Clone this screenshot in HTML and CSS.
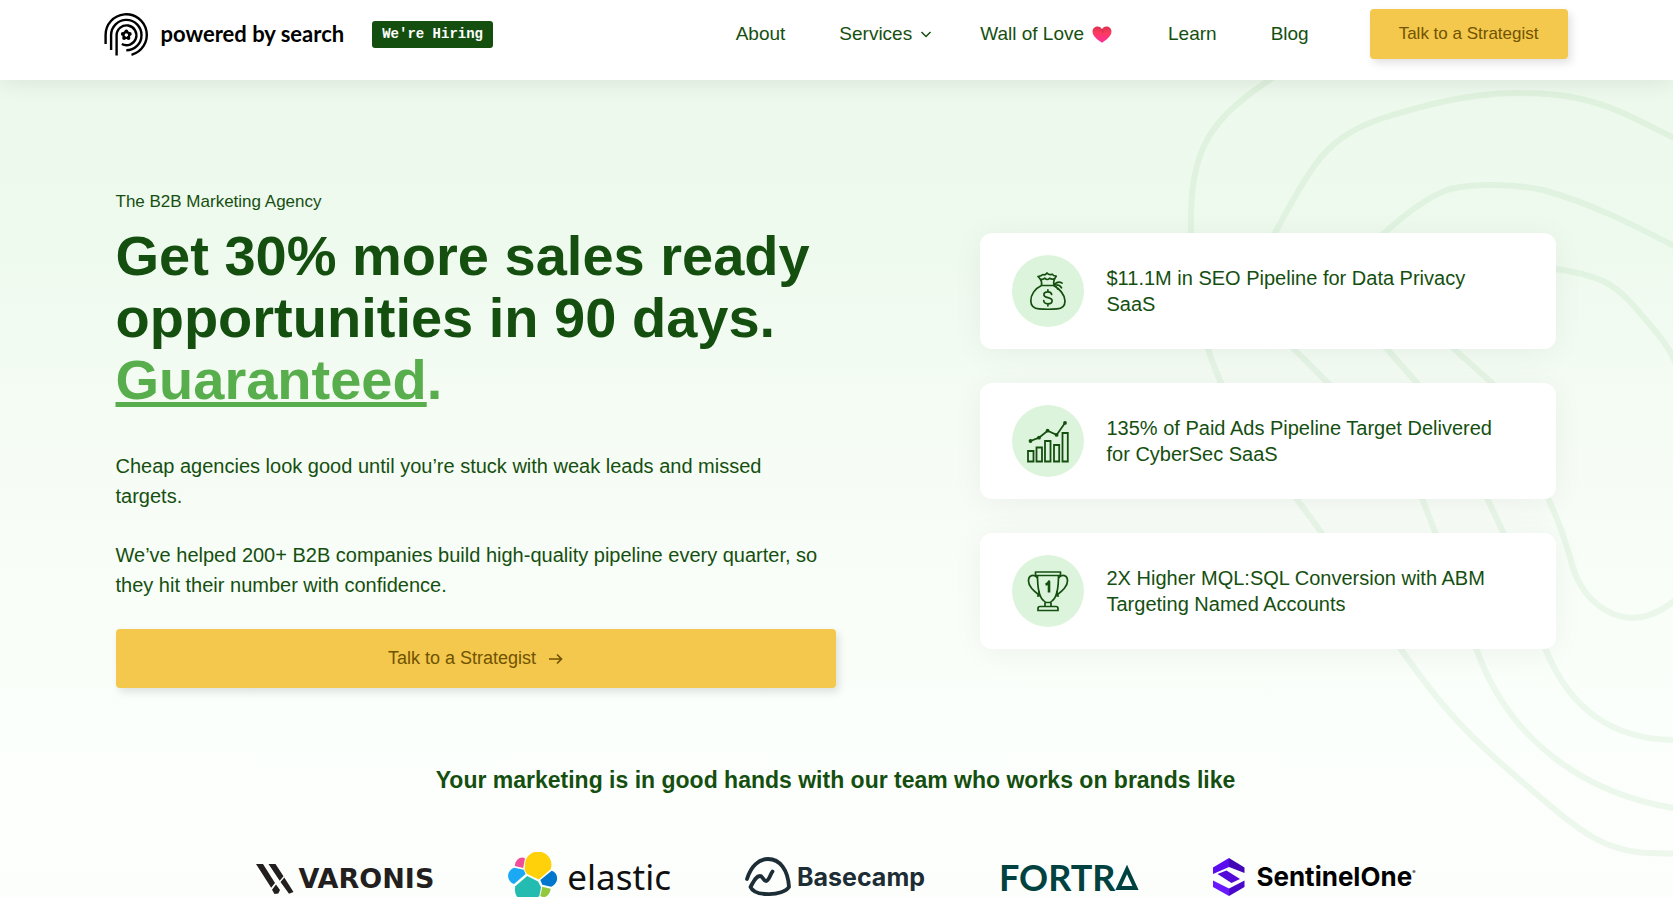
FILE: index.html
```html
<!DOCTYPE html>
<html lang="en">
<head>
<meta charset="utf-8">
<meta name="viewport" content="width=device-width, initial-scale=1">
<title>Powered by Search</title>
<link rel="stylesheet" href="styles.css">
</head>
<body>
<header class="site-header">
  <div class="header-inner">
    <a class="brand" href="#">
      <svg class="brand-mark" viewBox="1 -1 46 46" width="46" height="46" fill="none" stroke="#000" stroke-width="2.4" aria-hidden="true">
        <path d="M2.6 32V23A20.6 20.6 0 1 1 28.5 42.8"/>
        <path d="M8.1 38V23A15.2 15.2 0 1 1 23.3 38.3"/>
        <path d="M13.6 43.500V23A9.900 9.900 0 1 1 18.800 32"/>
        <g fill="#000" stroke="none"><circle cx="23.300" cy="19.400" r="1.900"/><circle cx="26.800" cy="21.900" r="1.900"/><circle cx="25.500" cy="26" r="1.900"/><circle cx="21.100" cy="26" r="1.900"/><circle cx="19.800" cy="21.900" r="1.900"/></g>
        <circle cx="23.300" cy="23.100" r="2.900" stroke-width="2.200"/>
      </svg>
      <span class="brand-name">powered by search</span>
    </a>
    <a class="hiring" href="#">We're Hiring</a>
    <nav class="nav" aria-label="Main">
      <a href="#">About</a>
      <a href="#">Services
        <svg class="chevron" viewBox="0 0 12 12" width="12" height="12" fill="none" stroke="currentColor" stroke-width="1.500" aria-hidden="true"><path d="M1.500 4l4.500 4.500L10.500 4"/></svg></a>
      <a href="#">Wall of Love
        <svg class="heart" viewBox="0 0 20 17" width="20" height="17" aria-hidden="true"><defs><linearGradient id="h" x1="0" y1="0" x2="0" y2="1"><stop offset="0" stop-color="#dc304f"/><stop offset=".4" stop-color="#fb3c5e"/><stop offset="1" stop-color="#ff2ba0"/></linearGradient></defs><path fill="url(#h)" d="M10 3C11.500.8 13.300.200 15.200.5 18 .9 19.800 3.200 19.400 6.300 19 10.300 15.300 13.200 10.800 16.300Q10 16.900 9.200 16.300C4.700 13.200 1 10.300.6 6.300.2 3.200 2 .9 4.800.5 6.700.2 8.500.8 10 3z"/><path d="M10 3.200q1 1.500.7 3.500" fill="none" stroke="#ce2748" stroke-width="1"/></svg></a>
      <a href="#">Learn</a>
      <a href="#">Blog</a>
    </nav>
    <button class="cta cta-small" type="button">Talk to a Strategist</button>
  </div>
</header>
<main class="hero">
  <svg class="contours" viewBox="1173 80 500 817" width="500" height="817" fill="none" stroke="#4caa4c" stroke-width="6" aria-hidden="true">
    <path d="M1275 76C1245 96 1222 114 1208 138C1194 163 1190 193 1191 233C1192 285 1197 320 1208 349Q1212 362 1221 383C1240 428 1270 455 1296 498L1321 532C1352 575 1371 605 1400 648C1440 705 1466 734 1520 780C1574 826 1600 852 1650 853L1680 854"/>
    <path d="M1680 141L1640 121C1593 97 1560 93 1513 93C1467 94 1425 105 1383 118C1350 129 1330 144 1315 165C1299 187 1288 209 1275 233C1252 280 1270 320 1294 349L1328 383C1370 421 1404 454 1422 498L1435 532C1450 575 1456 605 1476 648C1508 739 1583 795 1680 809"/>
    <path d="M1680 249C1630 223 1590 203 1543 190C1515 184 1475 183 1450 189C1424 198 1403 217 1384 233C1345 270 1352 320 1387 349L1417 383C1452 421 1470 458 1487 498L1503 532C1520 575 1529 610 1545 648C1570 710 1613 741 1680 740"/>
    <path d="M1677 366C1672 353 1667 345 1656 332C1639 312 1624 291 1603 281Q1585 273 1556 269C1490 260 1415 305 1454 349L1492 383C1525 420 1532 454 1548 498Q1561 526 1570 557C1577 587 1591 604 1613 614Q1646 627 1680 596"/>
  </svg>
  <div class="hero-inner">
    <section class="pitch">
      <p class="eyebrow">The B2B Marketing Agency</p>
      <h1>Get 30% more sales ready opportunities in 90 days. <span class="accent"><u>Guaranteed</u>.</span></h1>
      <p class="lead">Cheap agencies look good until you’re stuck with weak leads and missed targets.</p>
      <p class="lead">We’ve helped 200+ B2B companies build high-quality pipeline every quarter, so they hit their number with confidence.</p>
      <button class="cta cta-wide" type="button">Talk to a Strategist
        <svg viewBox="0 0 14 12" width="14" height="12" fill="none" stroke="currentColor" stroke-width="1.700" aria-hidden="true"><path d="M0 6h12.500M8 1.500L12.500 6 8 10.500"/></svg></button>
    </section>
    <section class="results" aria-label="Results">
      <article class="card">
        <span class="badge"><svg viewBox="0 0 40 40" width="40" height="40" fill="none" stroke="#154f10" stroke-width="1.700" stroke-linejoin="round" stroke-linecap="round" aria-hidden="true"><path d="M13.500 14.500C7 17.500 2.500 24 2.800 30c.2 5.200 3.600 7.600 8.200 7.900q9 .700 18 0c4.600-.3 8-2.700 8-7.900C37 24 31.500 17.500 25.500 14.500zM13.500 14.200c.5-3 .2-4.500-1.500-6.500L10 5.500c2-.3 3.500-.5 4.800-2 1.700.7 2.700.700 4.200-1.500 1.600 2 3 2.300 5.200 1.200.8 1.500 2 2 4 2-2.200 3-3.200 5.500-2.200 9M12.500 8c2 .700 3 .500 4.200-.8 1.700 1.700 3.400 1.700 4.900 0 1.400 1.200 2.600 1.400 4.700.5M26 14.300c2.500-3.500 5-3.800 8-2.300M26 14.300c3-.8 5.500-.5 7.500 2.500M26 14.300c1.500.7 3 2 3.600 3.700"/><path d="M23.700 23.500c-.4-2-1.700-2.700-3.800-2.700-2.400 0-4 1.100-4 2.900 0 4.200 8.200 1.700 8.200 6 0 2-1.700 3.100-4.200 3.100-2.300 0-4-1-4.200-3.300M19.900 18.800v2M19.900 32.800v2"/></svg></span>
        <p>$11.1M in SEO Pipeline for Data Privacy SaaS</p>
      </article>
      <article class="card">
        <span class="badge"><svg viewBox="0 0 44 44" width="44" height="44" fill="none" stroke="#154f10" stroke-width="1.800" aria-hidden="true"><path d="M2 32h5.500v10.500H2zM10.500 28.500H16v14h-5.500zM19 22h5.500v20.500H19zM28 26h5.200v16.500H28zM36.500 14h5.300v28.500h-5.300z"/><path d="M4.500 22l8.500-3.300 8.600-7 9 4.200 8.400-12"/><g fill="#154f10" stroke="none"><circle cx="4.500" cy="22" r="1.900"/><circle cx="13" cy="18.700" r="1.900"/><circle cx="21.600" cy="11.700" r="1.900"/><circle cx="30.600" cy="15.900" r="1.900"/><circle cx="39" cy="3.900" r="1.900"/></g></svg></span>
        <p>135% of Paid Ads Pipeline Target Delivered for CyberSec SaaS</p>
      </article>
      <article class="card">
        <span class="badge"><svg viewBox="0 0 42 42" width="42" height="42" fill="none" stroke="#154f10" stroke-width="1.700" stroke-linejoin="round" aria-hidden="true"><path d="M8.500 2h25v3.500h-25zM10.500 5.500c0 10 1 21 6 25q1.500 1.500 2.500 2h4q1-.5 2.500-2c5-4 6-15 6-25M18 32.500v4h6v-4M11 40.500v-2q0-2 2-2h16q2 0 2 2v2z"/><path d="M10.500 8C7 3.800 1.500 5 1.500 11c0 5.500 5 9.500 11 14.500M31.500 8c3.500-4.200 9-3 9 3 0 5.500-5 9.500-11 14.500M12 21v5h-2M30 21v5h2"/><path d="M18.500 14.500q3-.5 3.500-3v11" stroke-width="2.600"/></svg></span>
        <p>2X Higher MQL:SQL Conversion with ABM Targeting Named Accounts</p>
      </article>
    </section>
  </div>
  <section class="clients">
    <h2>Your marketing is in good hands with our team who works on brands like</h2>
    <ul class="logos">
      <li class="varonis"><svg viewBox="0 0 38 30" width="38" height="30" fill="#231f20" aria-hidden="true"><path d="M0 0h7l12 19-3.800 4.700zM12.500 0h7l8 12.300-3.800 4.500zM24.500 18l3.800-4.400L37.500 28l-4.500 1.800zM20 20.500l4 5.500-1.700 3.500-3.800.500-2.500-4.300z"/></svg><span>VARONIS</span></li>
      <li class="elastic"><svg viewBox="0 -1 51 51" width="50" height="50" aria-hidden="true"><path fill="#fed10a" d="M19.500 21.500l12 5.500 12-10.500A13.500 13.500 0 1 0 17.500 9.500l-.5 8z"/><path fill="#f04e98" d="M7 13.300l8.500 2L17.300 5.500C13.500 3 7.500 6 7 13.300z"/><path fill="#1ba9f5" d="M6.500 15C1 16.500-1.500 23 1.200 27.500 2.500 30 4.500 31.200 6.200 31.700L18 21.500l-2-4.300z"/><path fill="#24bbb1" d="M19.500 23.500L7.500 34C4 48 22 57 32 43.500l1.700-8.500-3-6z"/><path fill="#0077cc" d="M33 27.500L44.500 18c5.500 1.500 7.500 8.500 3.500 13.500-1 1.300-2.500 2.500-4 3L35 32.500z"/><path fill="#93c83e" d="M35 34.500l8.500 2C43 43 37.500 47 33 44z"/></svg><span>elastic</span></li>
      <li class="basecamp"><svg viewBox="0 0 46 40" width="46" height="40" fill="none" stroke="#1d2d35" stroke-width="3.800" stroke-linecap="round" stroke-linejoin="round" aria-hidden="true"><path d="M2 22C6 9 14 2 23 2 35 2 43 13 44 30c-6 9-34 10-38.500 0 3-5 5-11 9.500-11 3 0 3.500 5 6 5 3 0 4-6 6.500-9.500"/></svg><span>Basecamp</span></li>
      <li class="fortra"><span>FORTR</span><svg viewBox="0 0 24 25" width="24" height="25" fill="none" stroke="#00423f" stroke-width="4" aria-hidden="true"><path d="M12 4.500L20.500 23h-17z"/></svg></li>
      <li class="sentinel"><svg viewBox="0 0 32 38" width="32" height="38" aria-hidden="true"><path fill="#5b0df0" d="M0 9.500L16 0v9L0 16z"/><path fill="#4308b5" d="M16 0l15.500 9.500V15L16 9z"/><path fill="#5309d8" d="M4.500 16l9-3.500L27 21l-8.500 4z"/><path fill="#6a18ff" d="M0 22.500l16 8V38L0 29z"/><path fill="#4a08c8" d="M16 30.500l15.500-8V29L16 38z"/></svg><span>SentinelOne<sup>®</sup></span></li>
    </ul>
  </section>
</main>
</body>
</html>
```
FILE: styles.css
```css
* { box-sizing: border-box; }

body {
  margin: 0;
  background: #fff;
  color: #154f10;
  font-family: "Liberation Sans", Arial, sans-serif;
}

a { color: inherit; text-decoration: none; }

.site-header {
  position: relative;
  z-index: 1;
  padding-right: 2px;
  background: #fff;
  box-shadow: 0 0 24px rgba(0, 0, 0, .1);
}

.header-inner {
  display: flex;
  align-items: center;
  max-width: 1464px;
  height: 80px;
  margin: 0 auto;
  padding-bottom: 12px;
}

.brand { display: flex; align-items: center; gap: 11px; color: #000; }
.brand-name { font: 700 22px/28px Lato, sans-serif; }

.hiring {
  margin-left: 28px;
  padding: 0 10px;
  border-radius: 3px;
  background: #154f10;
  color: #fff;
  font: 700 14px/27px "Liberation Mono", monospace;
}

.nav {
  display: flex;
  gap: 54px;
  margin-left: auto;
  font-size: 19px;
  line-height: 24px;
}
.nav a { display: flex; align-items: center; gap: 8px; }
.nav .heart { margin-right: 2px; }
.nav .chevron { margin-right: -6px; }

.cta {
  padding: 0;
  border: 0;
  border-radius: 4px;
  background: #f3c84d;
  color: #705300;
  font-family: inherit;
  box-shadow: 3px 4px 8px rgba(0, 0, 0, .12);
}
.cta-small { margin-left: 61px; padding: 0 29px; font-size: 17px; line-height: 50px; }
.cta-wide {
  display: flex;
  align-items: center;
  justify-content: center;
  gap: 13px;
  width: 100%;
  font-size: 18px;
  line-height: 59px;
}

.hero {
  position: relative;
  overflow: hidden;
  padding-right: 2px;
  background: linear-gradient(#edf9ec, #effaef 180px, #f5fcf4 350px, #fbfffb 640px, #fdfefc);
}
.contours { position: absolute; top: 0; right: 0; opacity: .08; }

.hero-inner {
  position: relative;
  display: grid;
  grid-template-columns: 5fr 4fr;
  gap: 144px;
  max-width: 1440px;
  margin: 0 auto;
  padding-top: 109px;
}

.eyebrow { margin: 0 0 10px; font-size: 17px; line-height: 26px; }
h1 { margin: 0 0 40px; font-size: 56px; line-height: 62px; }
.accent { display: block; color: #58ae4c; }
.accent u { text-decoration-thickness: 5px; }
.lead { max-width: 712px; margin: 0 0 29px; font-size: 20px; line-height: 30px; }

.results { display: flex; flex-direction: column; gap: 34px; padding-top: 44px; }
.card {
  display: flex;
  align-items: center;
  gap: 23px;
  min-height: 116px;
  padding: 22px 48px 22px 32px;
  border-radius: 12px;
  background: #fff;
  box-shadow: 0 4px 32px rgba(0, 0, 0, .05);
}
.card p { margin: 0; font-size: 20px; line-height: 26px; }
.badge {
  display: flex;
  flex: none;
  align-items: center;
  justify-content: center;
  width: 72px;
  height: 72px;
  border-radius: 50%;
  background: #ddf4dc;
}

.clients { position: relative; padding: 76px 24px 40px; text-align: center; }
h2 { margin: 0 0 56px; font-size: 23px; line-height: 32px; }

.logos {
  display: flex;
  flex-wrap: wrap;
  justify-content: center;
  gap: 24px 74px;
  margin: 0;
  padding: 0;
  list-style: none;
}
.logos li { display: flex; align-items: center; height: 50px; line-height: 50px; }
.logos .varonis { gap: 5px; padding-top: 4px; color: #231f20; font: 700 27px/30px "DejaVu Sans", sans-serif; }
.elastic { gap: 9px; color: #101010; font: 400 35px "Noto Sans", sans-serif; }
.basecamp { gap: 6px; color: #1d2d35; font: 700 25px Inter, sans-serif; }
.fortra { color: #00423f; font: 700 36px Lato, sans-serif; }
.sentinel { gap: 11px; color: #000; font: 700 26px Inter, sans-serif; }
.sentinel sup { font-size: 5px; vertical-align: 12px; line-height: 5px; }
```
